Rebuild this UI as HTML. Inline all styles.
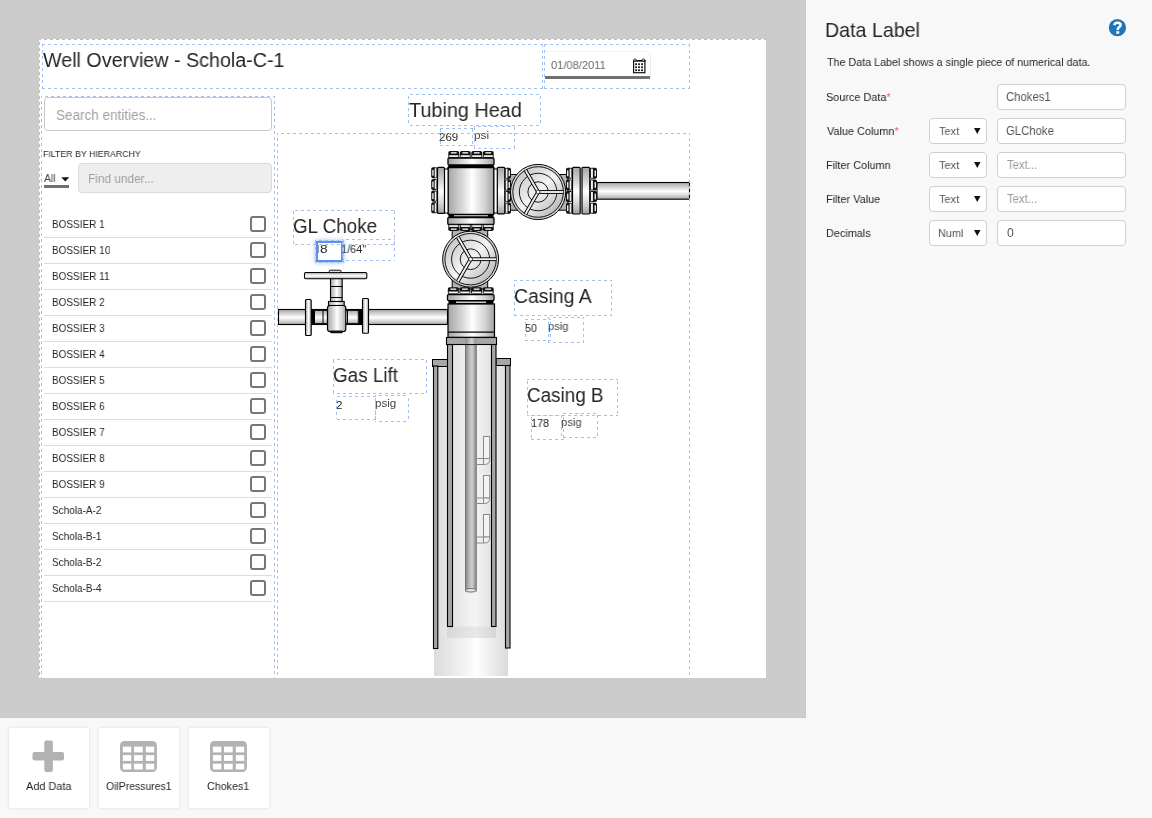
<!DOCTYPE html>
<html><head><meta charset="utf-8">
<style>
*{box-sizing:border-box;margin:0;padding:0}
html,body{width:1152px;height:818px;overflow:hidden;background:#f8f8f8;font-family:"Liberation Sans",sans-serif;color:#333;-webkit-font-smoothing:antialiased}
#stage{position:absolute;left:0;top:0;width:806px;height:718px;background:#cccccc;overflow:hidden}
#clip{position:absolute;left:39px;top:39px;width:727px;height:639px;background:#fff;overflow:hidden}
#inner{position:absolute;left:-39px;top:-39px;width:806px;height:718px}
.t{position:absolute;white-space:nowrap;line-height:1;transform-origin:0 0;will-change:transform}
.row{position:absolute;left:44px;width:228px;height:1px;background:#dcdcdc}
.cb{position:absolute;left:250px;width:16px;height:16px;border:2px solid #777;border-radius:3px}
.inp{position:absolute;background:#fff;border:1px solid #cfcfcf;border-radius:4px}
.card{position:absolute;top:728px;width:80px;height:80px;background:#fff;box-shadow:0 0 3px rgba(0,0,0,0.12)}
</style></head><body>
<div id="stage"><div id="clip"><div id="inner">
<svg style="position:absolute;left:0;top:0" width="806" height="718" viewBox="0 0 806 718">
<defs>
<linearGradient id="gh" x1="0" y1="0" x2="1" y2="0">
<stop offset="0" stop-color="#a6a6a6"/><stop offset="0.3" stop-color="#d6d6d6"/><stop offset="0.52" stop-color="#ffffff"/><stop offset="0.8" stop-color="#d2d2d2"/><stop offset="1" stop-color="#a2a2a2"/></linearGradient>
<linearGradient id="gv" x1="0" y1="0" x2="0" y2="1">
<stop offset="0" stop-color="#a6a6a6"/><stop offset="0.3" stop-color="#d6d6d6"/><stop offset="0.52" stop-color="#ffffff"/><stop offset="0.8" stop-color="#d2d2d2"/><stop offset="1" stop-color="#a2a2a2"/></linearGradient>
<linearGradient id="gt" x1="0" y1="0" x2="1" y2="0">
<stop offset="0" stop-color="#8c8c8c"/><stop offset="0.5" stop-color="#c9c9c9"/><stop offset="0.62" stop-color="#cdcdcd"/><stop offset="1" stop-color="#8c8c8c"/></linearGradient>
<linearGradient id="gfill" x1="0" y1="0" x2="1" y2="0">
<stop offset="0" stop-color="#dcdcdc"/><stop offset="0.48" stop-color="#f6f6f6"/><stop offset="0.56" stop-color="#ffffff"/><stop offset="1" stop-color="#dadada"/></linearGradient>
<linearGradient id="gfill2" x1="0" y1="0" x2="1" y2="0">
<stop offset="0" stop-color="#e2e2e2"/><stop offset="0.45" stop-color="#f2f2f2"/><stop offset="0.6" stop-color="#f4f4f4"/><stop offset="1" stop-color="#e2e2e2"/></linearGradient>
<linearGradient id="gwheel" x1="0" y1="0" x2="1" y2="1">
<stop offset="0" stop-color="#b8b8b8"/><stop offset="0.5" stop-color="#f4f4f4"/><stop offset="1" stop-color="#a8a8a8"/></linearGradient>
<linearGradient id="gring" x1="0" y1="0" x2="1" y2="1">
<stop offset="0" stop-color="#e8e8e8"/><stop offset="0.5" stop-color="#c8c8c8"/><stop offset="1" stop-color="#d8d8d8"/></linearGradient>
</defs>
<rect x="434" y="366" width="74.00" height="310.00" rx="0" fill="url(#gfill)" stroke="none" stroke-width="0" />
<rect x="452.5" y="344.5" width="38.50" height="282.50" rx="0" fill="url(#gfill2)" stroke="none" stroke-width="0" />
<rect x="447" y="626.5" width="49.00" height="11.50" rx="0" fill="url(#gfill2)" stroke="none" stroke-width="0" />
<rect x="447" y="626.5" width="49.00" height="11.50" rx="0" fill="rgba(0,0,0,0.05)" stroke="none" stroke-width="0" />
<rect x="432.5" y="359.5" width="15.00" height="7.00" rx="0" fill="#a6a6a6" stroke="#000" stroke-width="1" />
<rect x="496" y="358.5" width="14.50" height="7.00" rx="0" fill="#a6a6a6" stroke="#000" stroke-width="1" />
<rect x="433.5" y="366" width="4.30" height="282.50" rx="0" fill="#a6a6a6" stroke="#000" stroke-width="1.1" />
<rect x="505.5" y="365.5" width="4.50" height="282.50" rx="0" fill="#a6a6a6" stroke="#000" stroke-width="1.1" />
<rect x="447.5" y="344.5" width="5.00" height="282.00" rx="0" fill="#a6a6a6" stroke="#000" stroke-width="1.1" />
<rect x="491.5" y="344.5" width="4.50" height="282.00" rx="0" fill="#a6a6a6" stroke="#000" stroke-width="1.1" />
<rect x="465.6" y="340" width="10.60" height="251.00" rx="0" fill="url(#gt)" stroke="#6e6e6e" stroke-width="1" />
<ellipse cx="470.9" cy="590.3" rx="5.3" ry="1.8" fill="#e8e8e8" stroke="#6e6e6e" stroke-width="1"/>
<rect x="483.5" y="436.5" width="6.2" height="22.0" fill="#f3f3f3" stroke="#8a8a8a" stroke-width="1"/>
<path d="M476.5 458.5 H489.7 V459.5 Q489.7 464.5 484.5 464.5 H476.5 Z" fill="#efefef" stroke="#8a8a8a" stroke-width="1"/>
<line x1="483.5" y1="458.5" x2="483.5" y2="464.5" stroke="#8a8a8a" stroke-width="1"/>
<rect x="483.5" y="475.5" width="6.2" height="22.5" fill="#f3f3f3" stroke="#8a8a8a" stroke-width="1"/>
<path d="M476.5 498 H489.7 V498.5 Q489.7 503.5 484.5 503.5 H476.5 Z" fill="#efefef" stroke="#8a8a8a" stroke-width="1"/>
<line x1="483.5" y1="498" x2="483.5" y2="503.5" stroke="#8a8a8a" stroke-width="1"/>
<rect x="483.5" y="514.5" width="6.2" height="22.5" fill="#f3f3f3" stroke="#8a8a8a" stroke-width="1"/>
<path d="M476.5 537 H489.7 V538 Q489.7 543 484.5 543 H476.5 Z" fill="#efefef" stroke="#8a8a8a" stroke-width="1"/>
<line x1="483.5" y1="537" x2="483.5" y2="543" stroke="#8a8a8a" stroke-width="1"/>
<rect x="446.5" y="337.5" width="50.00" height="7.00" rx="0" fill="#a6a6a6" stroke="#000" stroke-width="1.1" />
<rect x="465.6" y="338.1" width="10.60" height="5.90" rx="0" fill="url(#gt)" stroke="none" stroke-width="0" />
<rect x="448" y="304" width="46.50" height="33.30" rx="0" fill="url(#gh)" stroke="#000" stroke-width="1.2" />
<line x1="448" y1="332.2" x2="494.5" y2="332.2" stroke="#000" stroke-width="1.2"/>
<rect x="278.5" y="309.5" width="169.00" height="15.00" rx="0" fill="url(#gv)" stroke="#000" stroke-width="1.1" />
<rect x="311" y="310.2" width="51.00" height="13.60" rx="0" fill="url(#gv)" stroke="#000" stroke-width="1.3" />
<line x1="314.5" y1="310.5" x2="314.5" y2="323.5" stroke="#000" stroke-width="1"/>
<line x1="323" y1="310.5" x2="323" y2="323.5" stroke="#000" stroke-width="1"/>
<line x1="347.5" y1="310.5" x2="347.5" y2="323.5" stroke="#000" stroke-width="1"/>
<line x1="358.3" y1="310.5" x2="358.3" y2="323.5" stroke="#000" stroke-width="1"/>
<path d="M311 309.5 L314 311 V323 L311 324.5Z" fill="#000"/><path d="M362 309.5 L359 311 V323 L362 324.5Z" fill="#000"/>
<rect x="305.5" y="299.5" width="5.70" height="36.00" rx="1" fill="url(#gh)" stroke="#000" stroke-width="1.1" />
<rect x="362.5" y="298.5" width="6.00" height="34.70" rx="1" fill="url(#gh)" stroke="#000" stroke-width="1.1" />
<rect x="330.5" y="278.5" width="11.70" height="26.50" rx="0" fill="url(#gh)" stroke="#000" stroke-width="1.1" />
<line x1="330.5" y1="286.5" x2="342.2" y2="286.5" stroke="#000" stroke-width="1"/><line x1="330.5" y1="297.5" x2="342.2" y2="297.5" stroke="#000" stroke-width="1"/>
<rect x="328.5" y="301.5" width="15.70" height="4.00" rx="0" fill="url(#gh)" stroke="#000" stroke-width="1.1" />
<rect x="327.5" y="305.5" width="18.30" height="26.00" rx="2.5" fill="url(#gh)" stroke="#000" stroke-width="1.2" />
<rect x="330" y="330.5" width="13.00" height="2.70" rx="1.2" fill="#111" stroke="none" stroke-width="0" />
<rect x="304.5" y="272.5" width="62.30" height="6.20" rx="1.2" fill="url(#gv)" stroke="#000" stroke-width="1.1" />
<rect x="329.2" y="270.2" width="11.80" height="2.40" rx="1" fill="#ddd" stroke="#000" stroke-width="0.9" />
<rect x="452.2" y="229" width="35.50" height="60.00" rx="0" fill="#b2b2b2" stroke="#000" stroke-width="1" />
<rect x="508" y="174.5" width="60.00" height="35.70" rx="0" fill="#b2b2b2" stroke="#000" stroke-width="1" />
<rect x="597" y="182.5" width="92.50" height="16.70" rx="0" fill="url(#gv)" stroke="#000" stroke-width="1.1" />
<rect x="448.30" y="151" width="10.90" height="7.300000000000011" rx="1.8" fill="#111"/>
<rect x="450.88" y="152.20" width="5.75" height="1.3" fill="#fff"/>
<rect x="449.20" y="155.23" width="9.10" height="1.83" fill="#f2f2f2"/>
<rect x="459.80" y="151" width="10.90" height="7.300000000000011" rx="1.8" fill="#111"/>
<rect x="462.38" y="152.20" width="5.75" height="1.3" fill="#fff"/>
<rect x="460.70" y="155.23" width="9.10" height="1.83" fill="#f2f2f2"/>
<rect x="471.30" y="151" width="10.90" height="7.300000000000011" rx="1.8" fill="#111"/>
<rect x="473.88" y="152.20" width="5.75" height="1.3" fill="#fff"/>
<rect x="472.20" y="155.23" width="9.10" height="1.83" fill="#f2f2f2"/>
<rect x="482.80" y="151" width="10.90" height="7.300000000000011" rx="1.8" fill="#111"/>
<rect x="485.38" y="152.20" width="5.75" height="1.3" fill="#fff"/>
<rect x="483.70" y="155.23" width="9.10" height="1.83" fill="#f2f2f2"/>
<path d="M449 164.5 H493 L495 168.5 H447 Z" fill="#000"/>
<rect x="448" y="158" width="46.00" height="7.00" rx="1" fill="url(#gh)" stroke="#000" stroke-width="1.3" />
<rect x="448.5" y="214" width="45" height="3.6" fill="#000"/>
<rect x="454" y="215.1" width="34" height="1.2" fill="#fff"/>
<rect x="447.8" y="217.5" width="46.20" height="7.00" rx="1" fill="url(#gh)" stroke="#000" stroke-width="1.3" />
<rect x="448.30" y="224" width="10.90" height="7" rx="1.8" fill="#111"/>
<rect x="449.20" y="225.19" width="9.10" height="1.75" fill="#f2f2f2"/>
<rect x="450.88" y="228.50" width="5.75" height="1.3" fill="#fff"/>
<rect x="459.80" y="224" width="10.90" height="7" rx="1.8" fill="#111"/>
<rect x="460.70" y="225.19" width="9.10" height="1.75" fill="#f2f2f2"/>
<rect x="462.38" y="228.50" width="5.75" height="1.3" fill="#fff"/>
<rect x="471.30" y="224" width="10.90" height="7" rx="1.8" fill="#111"/>
<rect x="472.20" y="225.19" width="9.10" height="1.75" fill="#f2f2f2"/>
<rect x="473.88" y="228.50" width="5.75" height="1.3" fill="#fff"/>
<rect x="482.80" y="224" width="10.90" height="7" rx="1.8" fill="#111"/>
<rect x="483.70" y="225.19" width="9.10" height="1.75" fill="#f2f2f2"/>
<rect x="485.38" y="228.50" width="5.75" height="1.3" fill="#fff"/>
<rect x="448" y="167.5" width="46.00" height="47.00" rx="1" fill="url(#gh)" stroke="#000" stroke-width="1.5" />
<rect x="444.2" y="169" width="3.80" height="44.00" rx="0" fill="#fff" stroke="#000" stroke-width="1" />
<rect x="494" y="169" width="3.50" height="44.00" rx="0" fill="#fff" stroke="#000" stroke-width="1" />
<rect x="431.2" y="167.30" width="6.400000000000034" height="11.05" rx="1.8" fill="#111"/>
<rect x="432.30" y="169.91" width="1.3" height="5.82" fill="#fff"/>
<rect x="434.72" y="168.20" width="1.73" height="9.25" fill="#f2f2f2"/>
<rect x="431.2" y="178.95" width="6.400000000000034" height="11.05" rx="1.8" fill="#111"/>
<rect x="432.30" y="181.56" width="1.3" height="5.82" fill="#fff"/>
<rect x="434.72" y="179.85" width="1.73" height="9.25" fill="#f2f2f2"/>
<rect x="431.2" y="190.60" width="6.400000000000034" height="11.05" rx="1.8" fill="#111"/>
<rect x="432.30" y="193.21" width="1.3" height="5.82" fill="#fff"/>
<rect x="434.72" y="191.50" width="1.73" height="9.25" fill="#f2f2f2"/>
<rect x="431.2" y="202.25" width="6.400000000000034" height="11.05" rx="1.8" fill="#111"/>
<rect x="432.30" y="204.86" width="1.3" height="5.82" fill="#fff"/>
<rect x="434.72" y="203.15" width="1.73" height="9.25" fill="#f2f2f2"/>
<rect x="437.5" y="167.3" width="7.00" height="46.10" rx="1" fill="url(#gv)" stroke="#000" stroke-width="1.2" />
<rect x="497.3" y="167.3" width="7.50" height="46.50" rx="1" fill="url(#gv)" stroke="#000" stroke-width="1.2" />
<rect x="504.6" y="167.80" width="6.399999999999977" height="11.03" rx="1.8" fill="#111"/>
<rect x="505.75" y="168.70" width="1.73" height="9.22" fill="#f2f2f2"/>
<rect x="508.60" y="170.41" width="1.3" height="5.81" fill="#fff"/>
<rect x="504.6" y="179.43" width="6.399999999999977" height="11.03" rx="1.8" fill="#111"/>
<rect x="505.75" y="180.32" width="1.73" height="9.22" fill="#f2f2f2"/>
<rect x="508.60" y="182.03" width="1.3" height="5.81" fill="#fff"/>
<rect x="504.6" y="191.05" width="6.399999999999977" height="11.03" rx="1.8" fill="#111"/>
<rect x="505.75" y="191.95" width="1.73" height="9.22" fill="#f2f2f2"/>
<rect x="508.60" y="193.66" width="1.3" height="5.81" fill="#fff"/>
<rect x="504.6" y="202.68" width="6.399999999999977" height="11.03" rx="1.8" fill="#111"/>
<rect x="505.75" y="203.57" width="1.73" height="9.22" fill="#f2f2f2"/>
<rect x="508.60" y="205.28" width="1.3" height="5.81" fill="#fff"/>
<rect x="566" y="167.80" width="6.600000000000023" height="11.03" rx="1.8" fill="#111"/>
<rect x="567.10" y="170.41" width="1.3" height="5.81" fill="#fff"/>
<rect x="569.63" y="168.70" width="1.78" height="9.22" fill="#f2f2f2"/>
<rect x="566" y="179.43" width="6.600000000000023" height="11.03" rx="1.8" fill="#111"/>
<rect x="567.10" y="182.03" width="1.3" height="5.81" fill="#fff"/>
<rect x="569.63" y="180.32" width="1.78" height="9.22" fill="#f2f2f2"/>
<rect x="566" y="191.05" width="6.600000000000023" height="11.03" rx="1.8" fill="#111"/>
<rect x="567.10" y="193.66" width="1.3" height="5.81" fill="#fff"/>
<rect x="569.63" y="191.95" width="1.78" height="9.22" fill="#f2f2f2"/>
<rect x="566" y="202.68" width="6.600000000000023" height="11.03" rx="1.8" fill="#111"/>
<rect x="567.10" y="205.28" width="1.3" height="5.81" fill="#fff"/>
<rect x="569.63" y="203.57" width="1.78" height="9.22" fill="#f2f2f2"/>
<rect x="572.5" y="167.3" width="7.70" height="46.70" rx="1" fill="url(#gv)" stroke="#000" stroke-width="1.2" />
<rect x="582" y="167.3" width="7.80" height="46.70" rx="1" fill="url(#gv)" stroke="#000" stroke-width="1.2" />
<rect x="589.6" y="167.80" width="7.399999999999977" height="11.03" rx="1.8" fill="#111"/>
<rect x="590.93" y="168.70" width="2.00" height="9.22" fill="#f2f2f2"/>
<rect x="594.60" y="170.41" width="1.3" height="5.81" fill="#fff"/>
<rect x="589.6" y="179.43" width="7.399999999999977" height="11.03" rx="1.8" fill="#111"/>
<rect x="590.93" y="180.32" width="2.00" height="9.22" fill="#f2f2f2"/>
<rect x="594.60" y="182.03" width="1.3" height="5.81" fill="#fff"/>
<rect x="589.6" y="191.05" width="7.399999999999977" height="11.03" rx="1.8" fill="#111"/>
<rect x="590.93" y="191.95" width="2.00" height="9.22" fill="#f2f2f2"/>
<rect x="594.60" y="193.66" width="1.3" height="5.81" fill="#fff"/>
<rect x="589.6" y="202.68" width="7.399999999999977" height="11.03" rx="1.8" fill="#111"/>
<rect x="590.93" y="203.57" width="2.00" height="9.22" fill="#f2f2f2"/>
<rect x="594.60" y="205.28" width="1.3" height="5.81" fill="#fff"/>
<rect x="447.80" y="287.3" width="11.03" height="7.300000000000011" rx="1.8" fill="#111"/>
<rect x="450.41" y="288.50" width="5.81" height="1.3" fill="#fff"/>
<rect x="448.70" y="291.53" width="9.22" height="1.83" fill="#f2f2f2"/>
<rect x="459.43" y="287.3" width="11.03" height="7.300000000000011" rx="1.8" fill="#111"/>
<rect x="462.03" y="288.50" width="5.81" height="1.3" fill="#fff"/>
<rect x="460.32" y="291.53" width="9.22" height="1.83" fill="#f2f2f2"/>
<rect x="471.05" y="287.3" width="11.03" height="7.300000000000011" rx="1.8" fill="#111"/>
<rect x="473.66" y="288.50" width="5.81" height="1.3" fill="#fff"/>
<rect x="471.95" y="291.53" width="9.22" height="1.83" fill="#f2f2f2"/>
<rect x="482.68" y="287.3" width="11.03" height="7.300000000000011" rx="1.8" fill="#111"/>
<rect x="485.28" y="288.50" width="5.81" height="1.3" fill="#fff"/>
<rect x="483.57" y="291.53" width="9.22" height="1.83" fill="#f2f2f2"/>
<rect x="447.5" y="294.6" width="46.50" height="6.00" rx="1" fill="url(#gh)" stroke="#000" stroke-width="1.3" />
<rect x="448.5" y="300.4" width="45" height="3.6" fill="#000"/>
<rect x="456" y="301.6" width="30" height="1.2" fill="#fff"/>
<circle cx="538.1" cy="192.0" r="27.6" fill="url(#gring)" stroke="#000" stroke-width="1"/>
<circle cx="538.1" cy="192.0" r="25.3" fill="url(#gwheel)" stroke="#000" stroke-width="0.9"/>
<circle cx="538.1" cy="192.0" r="18.77" fill="none" stroke="#000" stroke-width="0.9"/>
<circle cx="538.1" cy="192.0" r="10.21" fill="none" stroke="#000" stroke-width="0.9"/>
<line x1="538.1" y1="192.0" x2="563.10" y2="192.00" stroke="#000" stroke-width="3.8"/>
<line x1="538.1" y1="192.0" x2="563.10" y2="192.00" stroke="#f0f0f0" stroke-width="1.9"/>
<line x1="538.1" y1="192.0" x2="525.60" y2="213.65" stroke="#000" stroke-width="3.8"/>
<line x1="538.1" y1="192.0" x2="525.60" y2="213.65" stroke="#f0f0f0" stroke-width="1.9"/>
<line x1="538.1" y1="192.0" x2="525.60" y2="170.35" stroke="#000" stroke-width="3.8"/>
<line x1="538.1" y1="192.0" x2="525.60" y2="170.35" stroke="#f0f0f0" stroke-width="1.9"/>
<circle cx="538.1" cy="192.0" r="1.9" fill="#fff" stroke="#000" stroke-width="0.7"/>
<circle cx="470.6" cy="259.2" r="28" fill="url(#gring)" stroke="#000" stroke-width="1"/>
<circle cx="470.6" cy="259.2" r="25.7" fill="url(#gwheel)" stroke="#000" stroke-width="0.9"/>
<circle cx="470.6" cy="259.2" r="19.04" fill="none" stroke="#000" stroke-width="0.9"/>
<circle cx="470.6" cy="259.2" r="10.36" fill="none" stroke="#000" stroke-width="0.9"/>
<line x1="470.6" y1="259.2" x2="496.00" y2="259.20" stroke="#000" stroke-width="3.8"/>
<line x1="470.6" y1="259.2" x2="496.00" y2="259.20" stroke="#f0f0f0" stroke-width="1.9"/>
<line x1="470.6" y1="259.2" x2="457.90" y2="281.20" stroke="#000" stroke-width="3.8"/>
<line x1="470.6" y1="259.2" x2="457.90" y2="281.20" stroke="#f0f0f0" stroke-width="1.9"/>
<line x1="470.6" y1="259.2" x2="457.90" y2="237.20" stroke="#000" stroke-width="3.8"/>
<line x1="470.6" y1="259.2" x2="457.90" y2="237.20" stroke="#f0f0f0" stroke-width="1.9"/>
<circle cx="470.6" cy="259.2" r="1.9" fill="#fff" stroke="#000" stroke-width="0.7"/>
</svg>
<div style="position:absolute;left:545px;top:51px;width:106px;height:27px;border-top:1px solid #f3f3f3;border-right:1px solid #ededed;border-radius:0 6px 0 0"></div>
<div style="position:absolute;left:545px;top:76px;width:105px;height:3px;background:#707070"></div>
<svg style="position:absolute;left:633px;top:58px" width="13" height="16" viewBox="0 0 13 16">
<rect x="0.6" y="2.6" width="11.3" height="12.1" fill="#fff" stroke="#111" stroke-width="1.2"/>
<rect x="0" y="2" width="12.5" height="1.6" fill="#111"/>
<rect x="0.9" y="1" width="2.4" height="2.1" rx="0.8" fill="#fff" stroke="#111" stroke-width="0.9"/>
<rect x="9.2" y="1" width="2.4" height="2.1" rx="0.8" fill="#fff" stroke="#111" stroke-width="0.9"/>
<g fill="#111"><rect x="2.2" y="5.3" width="1.8" height="1.8"/><rect x="5.1" y="5.3" width="1.8" height="1.8"/><rect x="8.1" y="5.3" width="1.8" height="1.8"/>
<rect x="2.2" y="8.3" width="1.8" height="1.8"/><rect x="5.1" y="8.3" width="1.8" height="1.8"/><rect x="8.1" y="8.3" width="1.8" height="1.8"/>
<rect x="2.2" y="11.3" width="1.8" height="1.8"/><rect x="5.1" y="11.3" width="1.8" height="1.8"/><rect x="8.1" y="11.3" width="1.8" height="1.8"/></g>
</svg>
<div class="inp" style="left:44px;top:97px;width:228px;height:34px;border-color:#c8c8c8"></div>
<div style="position:absolute;left:44px;top:185px;width:25px;height:3px;background:#707070"></div>
<svg style="position:absolute;left:61px;top:176.5px" width="9" height="5"><path d="M0.3 0.3 H8.3 L4.3 4.5Z" fill="#111"/></svg>
<div class="inp" style="left:78px;top:163px;width:194px;height:30px;background:#eeeeee;border-color:#dadada"></div>
<div class="cb" style="top:216px"></div>
<div class="row" style="top:237px"></div>
<div class="cb" style="top:242px"></div>
<div class="row" style="top:263px"></div>
<div class="cb" style="top:268px"></div>
<div class="row" style="top:289px"></div>
<div class="cb" style="top:294px"></div>
<div class="row" style="top:315px"></div>
<div class="cb" style="top:320px"></div>
<div class="row" style="top:341px"></div>
<div class="cb" style="top:346px"></div>
<div class="row" style="top:367px"></div>
<div class="cb" style="top:372px"></div>
<div class="row" style="top:393px"></div>
<div class="cb" style="top:398px"></div>
<div class="row" style="top:419px"></div>
<div class="cb" style="top:424px"></div>
<div class="row" style="top:445px"></div>
<div class="cb" style="top:450px"></div>
<div class="row" style="top:471px"></div>
<div class="cb" style="top:476px"></div>
<div class="row" style="top:497px"></div>
<div class="cb" style="top:502px"></div>
<div class="row" style="top:523px"></div>
<div class="cb" style="top:528px"></div>
<div class="row" style="top:549px"></div>
<div class="cb" style="top:554px"></div>
<div class="row" style="top:575px"></div>
<div class="cb" style="top:580px"></div>
<div class="row" style="top:601px"></div>
<div class="t" style="left:42.90px;top:49.75px;font-size:20px;color:#262626;transform:scaleX(0.9848);">Well Overview - Schola-C-1</div>
<div class="t" style="left:409.00px;top:99.60px;font-size:20px;color:#262626;transform:scaleX(0.9912);">Tubing Head</div>
<div class="t" style="left:293.46px;top:215.90px;font-size:20px;color:#262626;transform:scaleX(0.9409);">GL Choke</div>
<div class="t" style="left:513.93px;top:285.90px;font-size:20px;color:#262626;transform:scaleX(0.9696);">Casing A</div>
<div class="t" style="left:333.26px;top:364.90px;font-size:20px;color:#262626;transform:scaleX(0.9441);">Gas Lift</div>
<div class="t" style="left:527.06px;top:385.20px;font-size:20px;color:#262626;transform:scaleX(0.9430);">Casing B</div>
<div class="t" style="left:439.40px;top:131.90px;font-size:11.5px;color:#262626;">269</div>
<div class="t" style="left:473.78px;top:130.10px;font-size:11.5px;color:#444;transform:scaleX(1.0231);">psi</div>
<div class="t" style="left:320.30px;top:244.00px;font-size:11.5px;color:#262626;transform:scaleX(1.1833);">8</div>
<div class="t" style="left:341.25px;top:244.00px;font-size:11.5px;color:#262626;transform:scaleX(0.9480);">1/64&quot;</div>
<div class="t" style="left:524.87px;top:322.90px;font-size:11.5px;color:#262626;transform:scaleX(0.9333);">50</div>
<div class="t" style="left:548.03px;top:321.10px;font-size:11.5px;color:#444;transform:scaleX(0.9650);">psig</div>
<div class="t" style="left:335.50px;top:399.60px;font-size:11.5px;color:#262626;">2</div>
<div class="t" style="left:374.59px;top:398.00px;font-size:11.5px;color:#444;transform:scaleX(1.0100);">psig</div>
<div class="t" style="left:531.46px;top:418.40px;font-size:11.5px;color:#262626;transform:scaleX(0.9444);">178</div>
<div class="t" style="left:561.02px;top:417.20px;font-size:11.5px;color:#444;transform:scaleX(0.9750);">psig</div>
<div class="t" style="left:550.70px;top:59.80px;font-size:11.4px;color:#6a6a6a;transform:scaleX(0.9750);">01/08/2011</div>
<div class="t" style="left:55.96px;top:107.80px;font-size:14.3px;color:#a0a0a0;transform:scaleX(0.9442);">Search entities...</div>
<div class="t" style="left:43.06px;top:148.90px;font-size:9.4px;color:#262626;transform:scaleX(0.9369);">FILTER BY HIERARCHY</div>
<div class="t" style="left:44.00px;top:172.90px;font-size:11.3px;color:#444;transform:scaleX(0.9250);">All</div>
<div class="t" style="left:88.08px;top:173.00px;font-size:12.9px;color:#a0a0a0;transform:scaleX(0.9186);">Find under...</div>
<div class="t" style="left:52.12px;top:218.80px;font-size:11.3px;color:#262626;transform:scaleX(0.8850);">BOSSIER 1</div>
<div class="t" style="left:52.12px;top:244.80px;font-size:11.3px;color:#262626;transform:scaleX(0.8850);">BOSSIER 10</div>
<div class="t" style="left:52.12px;top:270.80px;font-size:11.3px;color:#262626;transform:scaleX(0.8850);">BOSSIER 11</div>
<div class="t" style="left:52.12px;top:296.80px;font-size:11.3px;color:#262626;transform:scaleX(0.8850);">BOSSIER 2</div>
<div class="t" style="left:52.12px;top:322.80px;font-size:11.3px;color:#262626;transform:scaleX(0.8850);">BOSSIER 3</div>
<div class="t" style="left:52.12px;top:348.80px;font-size:11.3px;color:#262626;transform:scaleX(0.8850);">BOSSIER 4</div>
<div class="t" style="left:52.12px;top:374.80px;font-size:11.3px;color:#262626;transform:scaleX(0.8850);">BOSSIER 5</div>
<div class="t" style="left:52.12px;top:400.80px;font-size:11.3px;color:#262626;transform:scaleX(0.8850);">BOSSIER 6</div>
<div class="t" style="left:52.12px;top:426.80px;font-size:11.3px;color:#262626;transform:scaleX(0.8850);">BOSSIER 7</div>
<div class="t" style="left:52.12px;top:452.80px;font-size:11.3px;color:#262626;transform:scaleX(0.8850);">BOSSIER 8</div>
<div class="t" style="left:52.12px;top:478.80px;font-size:11.3px;color:#262626;transform:scaleX(0.8850);">BOSSIER 9</div>
<div class="t" style="left:52.12px;top:504.80px;font-size:11.3px;color:#262626;transform:scaleX(0.8850);">Schola-A-2</div>
<div class="t" style="left:52.12px;top:530.80px;font-size:11.3px;color:#262626;transform:scaleX(0.8850);">Schola-B-1</div>
<div class="t" style="left:52.12px;top:556.80px;font-size:11.3px;color:#262626;transform:scaleX(0.8850);">Schola-B-2</div>
<div class="t" style="left:52.12px;top:582.80px;font-size:11.3px;color:#262626;transform:scaleX(0.8850);">Schola-B-4</div>
<div style="position:absolute;left:316px;top:241px;width:27px;height:21px;border:2px solid #5b8ff0;box-shadow:0 0 4px 1px rgba(91,143,240,0.55)"></div>
<div style="position:absolute;left:318px;top:245px;width:1px;height:8px;background:#999"></div>
<svg style="position:absolute;left:0;top:0" width="806" height="718"><path fill="#a3c1f1" d="M39 39h2v1h-2zM44 39h3v1h-3zM50 39h3v1h-3zM56 39h3v1h-3zM62 39h3v1h-3zM68 39h3v1h-3zM74 39h3v1h-3zM80 39h3v1h-3zM86 39h3v1h-3zM92 39h3v1h-3zM98 39h3v1h-3zM104 39h3v1h-3zM110 39h3v1h-3zM116 39h3v1h-3zM122 39h3v1h-3zM128 39h3v1h-3zM134 39h3v1h-3zM140 39h3v1h-3zM146 39h3v1h-3zM152 39h3v1h-3zM158 39h3v1h-3zM164 39h3v1h-3zM170 39h3v1h-3zM176 39h3v1h-3zM182 39h3v1h-3zM188 39h3v1h-3zM194 39h3v1h-3zM200 39h3v1h-3zM206 39h3v1h-3zM212 39h3v1h-3zM218 39h3v1h-3zM224 39h3v1h-3zM230 39h3v1h-3zM236 39h3v1h-3zM242 39h3v1h-3zM248 39h3v1h-3zM254 39h3v1h-3zM260 39h3v1h-3zM266 39h3v1h-3zM272 39h3v1h-3zM278 39h3v1h-3zM284 39h3v1h-3zM290 39h3v1h-3zM296 39h3v1h-3zM302 39h3v1h-3zM308 39h3v1h-3zM314 39h3v1h-3zM320 39h3v1h-3zM326 39h3v1h-3zM332 39h3v1h-3zM338 39h3v1h-3zM344 39h3v1h-3zM350 39h3v1h-3zM356 39h3v1h-3zM362 39h3v1h-3zM368 39h3v1h-3zM374 39h3v1h-3zM380 39h3v1h-3zM386 39h3v1h-3zM392 39h3v1h-3zM398 39h3v1h-3zM404 39h3v1h-3zM410 39h3v1h-3zM416 39h3v1h-3zM422 39h3v1h-3zM428 39h3v1h-3zM434 39h3v1h-3zM440 39h3v1h-3zM446 39h3v1h-3zM452 39h3v1h-3zM458 39h3v1h-3zM464 39h3v1h-3zM470 39h3v1h-3zM476 39h3v1h-3zM482 39h3v1h-3zM488 39h3v1h-3zM494 39h3v1h-3zM500 39h3v1h-3zM506 39h3v1h-3zM512 39h3v1h-3zM518 39h3v1h-3zM524 39h3v1h-3zM530 39h3v1h-3zM536 39h3v1h-3zM542 39h3v1h-3zM548 39h3v1h-3zM554 39h3v1h-3zM560 39h3v1h-3zM566 39h3v1h-3zM572 39h3v1h-3zM578 39h3v1h-3zM584 39h3v1h-3zM590 39h3v1h-3zM596 39h3v1h-3zM602 39h3v1h-3zM608 39h3v1h-3zM614 39h3v1h-3zM620 39h3v1h-3zM626 39h3v1h-3zM632 39h3v1h-3zM638 39h3v1h-3zM644 39h3v1h-3zM650 39h3v1h-3zM656 39h3v1h-3zM662 39h3v1h-3zM668 39h3v1h-3zM674 39h3v1h-3zM680 39h3v1h-3zM686 39h3v1h-3zM692 39h3v1h-3zM698 39h3v1h-3zM704 39h3v1h-3zM710 39h3v1h-3zM716 39h3v1h-3zM722 39h3v1h-3zM728 39h3v1h-3zM734 39h3v1h-3zM740 39h3v1h-3zM746 39h3v1h-3zM752 39h3v1h-3zM758 39h3v1h-3zM764 39h3v1h-3zM39 42h1v3h-1zM39 48h1v3h-1zM39 54h1v3h-1zM39 60h1v3h-1zM39 66h1v3h-1zM39 72h1v3h-1zM39 78h1v3h-1zM39 84h1v3h-1zM39 90h1v3h-1zM39 96h1v3h-1zM39 102h1v3h-1zM39 108h1v3h-1zM39 114h1v3h-1zM39 120h1v3h-1zM39 126h1v3h-1zM39 132h1v3h-1zM39 138h1v3h-1zM39 144h1v3h-1zM39 150h1v3h-1zM39 156h1v3h-1zM39 162h1v3h-1zM39 168h1v3h-1zM39 174h1v3h-1zM39 180h1v3h-1zM39 186h1v3h-1zM39 192h1v3h-1zM39 198h1v3h-1zM39 204h1v3h-1zM39 210h1v3h-1zM39 216h1v3h-1zM39 222h1v3h-1zM39 228h1v3h-1zM39 234h1v3h-1zM39 240h1v3h-1zM39 246h1v3h-1zM39 252h1v3h-1zM39 258h1v3h-1zM39 264h1v3h-1zM39 270h1v3h-1zM39 276h1v3h-1zM39 282h1v3h-1zM39 288h1v3h-1zM39 294h1v3h-1zM39 300h1v3h-1zM39 306h1v3h-1zM39 312h1v3h-1zM39 318h1v3h-1zM39 324h1v3h-1zM39 330h1v3h-1zM39 336h1v3h-1zM39 342h1v3h-1zM39 348h1v3h-1zM39 354h1v3h-1zM39 360h1v3h-1zM39 366h1v3h-1zM39 372h1v3h-1zM39 378h1v3h-1zM39 384h1v3h-1zM39 390h1v3h-1zM39 396h1v3h-1zM39 402h1v3h-1zM39 408h1v3h-1zM39 414h1v3h-1zM39 420h1v3h-1zM39 426h1v3h-1zM39 432h1v3h-1zM39 438h1v3h-1zM39 444h1v3h-1zM39 450h1v3h-1zM39 456h1v3h-1zM39 462h1v3h-1zM39 468h1v3h-1zM39 474h1v3h-1zM39 480h1v3h-1zM39 486h1v3h-1zM39 492h1v3h-1zM39 498h1v3h-1zM39 504h1v3h-1zM39 510h1v3h-1zM39 516h1v3h-1zM39 522h1v3h-1zM39 528h1v3h-1zM39 534h1v3h-1zM39 540h1v3h-1zM39 546h1v3h-1zM39 552h1v3h-1zM39 558h1v3h-1zM39 564h1v3h-1zM39 570h1v3h-1zM39 576h1v3h-1zM39 582h1v3h-1zM39 588h1v3h-1zM39 594h1v3h-1zM39 600h1v3h-1zM39 606h1v3h-1zM39 612h1v3h-1zM39 618h1v3h-1zM39 624h1v3h-1zM39 630h1v3h-1zM39 636h1v3h-1zM39 642h1v3h-1zM39 648h1v3h-1zM39 654h1v3h-1zM39 660h1v3h-1zM39 666h1v3h-1zM39 672h1v3h-1zM39 678h1v1h-1zM42 44h3v1h-3zM48 44h3v1h-3zM54 44h3v1h-3zM60 44h3v1h-3zM66 44h3v1h-3zM72 44h3v1h-3zM78 44h3v1h-3zM84 44h3v1h-3zM90 44h3v1h-3zM96 44h3v1h-3zM102 44h3v1h-3zM108 44h3v1h-3zM114 44h3v1h-3zM120 44h3v1h-3zM126 44h3v1h-3zM132 44h3v1h-3zM138 44h3v1h-3zM144 44h3v1h-3zM150 44h3v1h-3zM156 44h3v1h-3zM162 44h3v1h-3zM168 44h3v1h-3zM174 44h3v1h-3zM180 44h3v1h-3zM186 44h3v1h-3zM192 44h3v1h-3zM198 44h3v1h-3zM204 44h3v1h-3zM210 44h3v1h-3zM216 44h3v1h-3zM222 44h3v1h-3zM228 44h3v1h-3zM234 44h3v1h-3zM240 44h3v1h-3zM246 44h3v1h-3zM252 44h3v1h-3zM258 44h3v1h-3zM264 44h3v1h-3zM270 44h3v1h-3zM276 44h3v1h-3zM282 44h3v1h-3zM288 44h3v1h-3zM294 44h3v1h-3zM300 44h3v1h-3zM306 44h3v1h-3zM312 44h3v1h-3zM318 44h3v1h-3zM324 44h3v1h-3zM330 44h3v1h-3zM336 44h3v1h-3zM342 44h3v1h-3zM348 44h3v1h-3zM354 44h3v1h-3zM360 44h3v1h-3zM366 44h3v1h-3zM372 44h3v1h-3zM378 44h3v1h-3zM384 44h3v1h-3zM390 44h3v1h-3zM396 44h3v1h-3zM402 44h3v1h-3zM408 44h3v1h-3zM414 44h3v1h-3zM420 44h3v1h-3zM426 44h3v1h-3zM432 44h3v1h-3zM438 44h3v1h-3zM444 44h3v1h-3zM450 44h3v1h-3zM456 44h3v1h-3zM462 44h3v1h-3zM468 44h3v1h-3zM474 44h3v1h-3zM480 44h3v1h-3zM486 44h3v1h-3zM492 44h3v1h-3zM498 44h3v1h-3zM504 44h3v1h-3zM510 44h3v1h-3zM516 44h3v1h-3zM522 44h3v1h-3zM528 44h3v1h-3zM534 44h3v1h-3zM540 44h3v1h-3zM42 88h3v1h-3zM48 88h3v1h-3zM54 88h3v1h-3zM60 88h3v1h-3zM66 88h3v1h-3zM72 88h3v1h-3zM78 88h3v1h-3zM84 88h3v1h-3zM90 88h3v1h-3zM96 88h3v1h-3zM102 88h3v1h-3zM108 88h3v1h-3zM114 88h3v1h-3zM120 88h3v1h-3zM126 88h3v1h-3zM132 88h3v1h-3zM138 88h3v1h-3zM144 88h3v1h-3zM150 88h3v1h-3zM156 88h3v1h-3zM162 88h3v1h-3zM168 88h3v1h-3zM174 88h3v1h-3zM180 88h3v1h-3zM186 88h3v1h-3zM192 88h3v1h-3zM198 88h3v1h-3zM204 88h3v1h-3zM210 88h3v1h-3zM216 88h3v1h-3zM222 88h3v1h-3zM228 88h3v1h-3zM234 88h3v1h-3zM240 88h3v1h-3zM246 88h3v1h-3zM252 88h3v1h-3zM258 88h3v1h-3zM264 88h3v1h-3zM270 88h3v1h-3zM276 88h3v1h-3zM282 88h3v1h-3zM288 88h3v1h-3zM294 88h3v1h-3zM300 88h3v1h-3zM306 88h3v1h-3zM312 88h3v1h-3zM318 88h3v1h-3zM324 88h3v1h-3zM330 88h3v1h-3zM336 88h3v1h-3zM342 88h3v1h-3zM348 88h3v1h-3zM354 88h3v1h-3zM360 88h3v1h-3zM366 88h3v1h-3zM372 88h3v1h-3zM378 88h3v1h-3zM384 88h3v1h-3zM390 88h3v1h-3zM396 88h3v1h-3zM402 88h3v1h-3zM408 88h3v1h-3zM414 88h3v1h-3zM420 88h3v1h-3zM426 88h3v1h-3zM432 88h3v1h-3zM438 88h3v1h-3zM444 88h3v1h-3zM450 88h3v1h-3zM456 88h3v1h-3zM462 88h3v1h-3zM468 88h3v1h-3zM474 88h3v1h-3zM480 88h3v1h-3zM486 88h3v1h-3zM492 88h3v1h-3zM498 88h3v1h-3zM504 88h3v1h-3zM510 88h3v1h-3zM516 88h3v1h-3zM522 88h3v1h-3zM528 88h3v1h-3zM534 88h3v1h-3zM540 88h3v1h-3zM42 45h1v2h-1zM42 50h1v3h-1zM42 56h1v3h-1zM42 62h1v3h-1zM42 68h1v3h-1zM42 74h1v3h-1zM42 80h1v3h-1zM42 86h1v2h-1zM542 45h1v2h-1zM542 50h1v3h-1zM542 56h1v3h-1zM542 62h1v3h-1zM542 68h1v3h-1zM542 74h1v3h-1zM542 80h1v3h-1zM542 86h1v2h-1zM544 44h3v1h-3zM550 44h3v1h-3zM556 44h3v1h-3zM562 44h3v1h-3zM568 44h3v1h-3zM574 44h3v1h-3zM580 44h3v1h-3zM586 44h3v1h-3zM592 44h3v1h-3zM598 44h3v1h-3zM604 44h3v1h-3zM610 44h3v1h-3zM616 44h3v1h-3zM622 44h3v1h-3zM628 44h3v1h-3zM634 44h3v1h-3zM640 44h3v1h-3zM646 44h3v1h-3zM652 44h3v1h-3zM658 44h3v1h-3zM664 44h3v1h-3zM670 44h3v1h-3zM676 44h3v1h-3zM682 44h3v1h-3zM688 44h2v1h-2zM544 88h3v1h-3zM550 88h3v1h-3zM556 88h3v1h-3zM562 88h3v1h-3zM568 88h3v1h-3zM574 88h3v1h-3zM580 88h3v1h-3zM586 88h3v1h-3zM592 88h3v1h-3zM598 88h3v1h-3zM604 88h3v1h-3zM610 88h3v1h-3zM616 88h3v1h-3zM622 88h3v1h-3zM628 88h3v1h-3zM634 88h3v1h-3zM640 88h3v1h-3zM646 88h3v1h-3zM652 88h3v1h-3zM658 88h3v1h-3zM664 88h3v1h-3zM670 88h3v1h-3zM676 88h3v1h-3zM682 88h3v1h-3zM688 88h2v1h-2zM544 45h1v2h-1zM544 50h1v3h-1zM544 56h1v3h-1zM544 62h1v3h-1zM544 68h1v3h-1zM544 74h1v3h-1zM544 80h1v3h-1zM544 86h1v2h-1zM689 45h1v2h-1zM689 50h1v3h-1zM689 56h1v3h-1zM689 62h1v3h-1zM689 68h1v3h-1zM689 74h1v3h-1zM689 80h1v3h-1zM689 86h1v2h-1zM41 96h1v1h-1zM45 96h3v1h-3zM51 96h3v1h-3zM57 96h3v1h-3zM63 96h3v1h-3zM69 96h3v1h-3zM75 96h3v1h-3zM81 96h3v1h-3zM87 96h3v1h-3zM93 96h3v1h-3zM99 96h3v1h-3zM105 96h3v1h-3zM111 96h3v1h-3zM117 96h3v1h-3zM123 96h3v1h-3zM129 96h3v1h-3zM135 96h3v1h-3zM141 96h3v1h-3zM147 96h3v1h-3zM153 96h3v1h-3zM159 96h3v1h-3zM165 96h3v1h-3zM171 96h3v1h-3zM177 96h3v1h-3zM183 96h3v1h-3zM189 96h3v1h-3zM195 96h3v1h-3zM201 96h3v1h-3zM207 96h3v1h-3zM213 96h3v1h-3zM219 96h3v1h-3zM225 96h3v1h-3zM231 96h3v1h-3zM237 96h3v1h-3zM243 96h3v1h-3zM249 96h3v1h-3zM255 96h3v1h-3zM261 96h3v1h-3zM267 96h3v1h-3zM273 96h2v1h-2zM41 96h1v2h-1zM41 97h1v1h-1zM41 101h1v3h-1zM41 107h1v3h-1zM41 113h1v3h-1zM41 119h1v3h-1zM41 125h1v3h-1zM41 131h1v3h-1zM41 137h1v3h-1zM41 143h1v3h-1zM41 149h1v3h-1zM41 155h1v3h-1zM41 161h1v3h-1zM41 167h1v3h-1zM41 173h1v3h-1zM41 179h1v3h-1zM41 185h1v3h-1zM41 191h1v3h-1zM41 197h1v3h-1zM41 203h1v3h-1zM41 209h1v3h-1zM41 215h1v3h-1zM41 221h1v3h-1zM41 227h1v3h-1zM41 233h1v3h-1zM41 239h1v3h-1zM41 245h1v3h-1zM41 251h1v3h-1zM41 257h1v3h-1zM41 263h1v3h-1zM41 269h1v3h-1zM41 275h1v3h-1zM41 281h1v3h-1zM41 287h1v3h-1zM41 293h1v3h-1zM41 299h1v3h-1zM41 305h1v3h-1zM41 311h1v3h-1zM41 317h1v3h-1zM41 323h1v3h-1zM41 329h1v3h-1zM41 335h1v3h-1zM41 341h1v3h-1zM41 347h1v3h-1zM41 353h1v3h-1zM41 359h1v3h-1zM41 365h1v3h-1zM41 371h1v3h-1zM41 377h1v3h-1zM41 383h1v3h-1zM41 389h1v3h-1zM41 395h1v3h-1zM41 401h1v3h-1zM41 407h1v3h-1zM41 413h1v3h-1zM41 419h1v3h-1zM41 425h1v3h-1zM41 431h1v3h-1zM41 437h1v3h-1zM41 443h1v3h-1zM41 449h1v3h-1zM41 455h1v3h-1zM41 461h1v3h-1zM41 467h1v3h-1zM41 473h1v3h-1zM41 479h1v3h-1zM41 485h1v3h-1zM41 491h1v3h-1zM41 497h1v3h-1zM41 503h1v3h-1zM41 509h1v3h-1zM41 515h1v3h-1zM41 521h1v3h-1zM41 527h1v3h-1zM41 533h1v3h-1zM41 539h1v3h-1zM41 545h1v3h-1zM41 551h1v3h-1zM41 557h1v3h-1zM41 563h1v3h-1zM41 569h1v3h-1zM41 575h1v3h-1zM41 581h1v3h-1zM41 587h1v3h-1zM41 593h1v3h-1zM41 599h1v3h-1zM41 605h1v3h-1zM41 611h1v3h-1zM41 617h1v3h-1zM41 623h1v3h-1zM41 629h1v3h-1zM41 635h1v3h-1zM41 641h1v3h-1zM41 647h1v3h-1zM41 653h1v3h-1zM41 659h1v3h-1zM41 665h1v3h-1zM41 671h1v3h-1zM41 677h1v3h-1zM41 683h1v3h-1zM41 689h1v3h-1zM41 695h1v3h-1zM41 701h1v3h-1zM41 707h1v3h-1zM41 713h1v3h-1zM41 719h1v3h-1zM41 725h1v3h-1zM41 731h1v3h-1zM41 737h1v3h-1zM41 743h1v3h-1zM41 749h1v3h-1zM41 755h1v3h-1zM274 97h1v1h-1zM274 101h1v3h-1zM274 107h1v3h-1zM274 113h1v3h-1zM274 119h1v3h-1zM274 125h1v3h-1zM274 131h1v3h-1zM274 137h1v3h-1zM274 143h1v3h-1zM274 149h1v3h-1zM274 155h1v3h-1zM274 161h1v3h-1zM274 167h1v3h-1zM274 173h1v3h-1zM274 179h1v3h-1zM274 185h1v3h-1zM274 191h1v3h-1zM274 197h1v3h-1zM274 203h1v3h-1zM274 209h1v3h-1zM274 215h1v3h-1zM274 221h1v3h-1zM274 227h1v3h-1zM274 233h1v3h-1zM274 239h1v3h-1zM274 245h1v3h-1zM274 251h1v3h-1zM274 257h1v3h-1zM274 263h1v3h-1zM274 269h1v3h-1zM274 275h1v3h-1zM274 281h1v3h-1zM274 287h1v3h-1zM274 293h1v3h-1zM274 299h1v3h-1zM274 305h1v3h-1zM274 311h1v3h-1zM274 317h1v3h-1zM274 323h1v3h-1zM274 329h1v3h-1zM274 335h1v3h-1zM274 341h1v3h-1zM274 347h1v3h-1zM274 353h1v3h-1zM274 359h1v3h-1zM274 365h1v3h-1zM274 371h1v3h-1zM274 377h1v3h-1zM274 383h1v3h-1zM274 389h1v3h-1zM274 395h1v3h-1zM274 401h1v3h-1zM274 407h1v3h-1zM274 413h1v3h-1zM274 419h1v3h-1zM274 425h1v3h-1zM274 431h1v3h-1zM274 437h1v3h-1zM274 443h1v3h-1zM274 449h1v3h-1zM274 455h1v3h-1zM274 461h1v3h-1zM274 467h1v3h-1zM274 473h1v3h-1zM274 479h1v3h-1zM274 485h1v3h-1zM274 491h1v3h-1zM274 497h1v3h-1zM274 503h1v3h-1zM274 509h1v3h-1zM274 515h1v3h-1zM274 521h1v3h-1zM274 527h1v3h-1zM274 533h1v3h-1zM274 539h1v3h-1zM274 545h1v3h-1zM274 551h1v3h-1zM274 557h1v3h-1zM274 563h1v3h-1zM274 569h1v3h-1zM274 575h1v3h-1zM274 581h1v3h-1zM274 587h1v3h-1zM274 593h1v3h-1zM274 599h1v3h-1zM274 605h1v3h-1zM274 611h1v3h-1zM274 617h1v3h-1zM274 623h1v3h-1zM274 629h1v3h-1zM274 635h1v3h-1zM274 641h1v3h-1zM274 647h1v3h-1zM274 653h1v3h-1zM274 659h1v3h-1zM274 665h1v3h-1zM274 671h1v3h-1zM274 677h1v3h-1zM274 683h1v3h-1zM274 689h1v3h-1zM274 695h1v3h-1zM274 701h1v3h-1zM274 707h1v3h-1zM274 713h1v3h-1zM274 719h1v3h-1zM274 725h1v3h-1zM274 731h1v3h-1zM274 737h1v3h-1zM274 743h1v3h-1zM274 749h1v3h-1zM274 755h1v3h-1zM277 133h1v1h-1zM281 133h3v1h-3zM287 133h3v1h-3zM293 133h3v1h-3zM299 133h3v1h-3zM305 133h3v1h-3zM311 133h3v1h-3zM317 133h3v1h-3zM323 133h3v1h-3zM329 133h3v1h-3zM335 133h3v1h-3zM341 133h3v1h-3zM347 133h3v1h-3zM353 133h3v1h-3zM359 133h3v1h-3zM365 133h3v1h-3zM371 133h3v1h-3zM377 133h3v1h-3zM383 133h3v1h-3zM389 133h3v1h-3zM395 133h3v1h-3zM401 133h3v1h-3zM407 133h3v1h-3zM413 133h3v1h-3zM419 133h3v1h-3zM425 133h3v1h-3zM431 133h3v1h-3zM437 133h3v1h-3zM443 133h3v1h-3zM449 133h3v1h-3zM455 133h3v1h-3zM461 133h3v1h-3zM467 133h3v1h-3zM473 133h3v1h-3zM479 133h3v1h-3zM485 133h3v1h-3zM491 133h3v1h-3zM497 133h3v1h-3zM503 133h3v1h-3zM509 133h3v1h-3zM515 133h3v1h-3zM521 133h3v1h-3zM527 133h3v1h-3zM533 133h3v1h-3zM539 133h3v1h-3zM545 133h3v1h-3zM551 133h3v1h-3zM557 133h3v1h-3zM563 133h3v1h-3zM569 133h3v1h-3zM575 133h3v1h-3zM581 133h3v1h-3zM587 133h3v1h-3zM593 133h3v1h-3zM599 133h3v1h-3zM605 133h3v1h-3zM611 133h3v1h-3zM617 133h3v1h-3zM623 133h3v1h-3zM629 133h3v1h-3zM635 133h3v1h-3zM641 133h3v1h-3zM647 133h3v1h-3zM653 133h3v1h-3zM659 133h3v1h-3zM665 133h3v1h-3zM671 133h3v1h-3zM677 133h3v1h-3zM683 133h3v1h-3zM689 133h1v1h-1zM277 133h1v2h-1zM277 134h1v1h-1zM277 138h1v3h-1zM277 144h1v3h-1zM277 150h1v3h-1zM277 156h1v3h-1zM277 162h1v3h-1zM277 168h1v3h-1zM277 174h1v3h-1zM277 180h1v3h-1zM277 186h1v3h-1zM277 192h1v3h-1zM277 198h1v3h-1zM277 204h1v3h-1zM277 210h1v3h-1zM277 216h1v3h-1zM277 222h1v3h-1zM277 228h1v3h-1zM277 234h1v3h-1zM277 240h1v3h-1zM277 246h1v3h-1zM277 252h1v3h-1zM277 258h1v3h-1zM277 264h1v3h-1zM277 270h1v3h-1zM277 276h1v3h-1zM277 282h1v3h-1zM277 288h1v3h-1zM277 294h1v3h-1zM277 300h1v3h-1zM277 306h1v3h-1zM277 312h1v3h-1zM277 318h1v3h-1zM277 324h1v3h-1zM277 330h1v3h-1zM277 336h1v3h-1zM277 342h1v3h-1zM277 348h1v3h-1zM277 354h1v3h-1zM277 360h1v3h-1zM277 366h1v3h-1zM277 372h1v3h-1zM277 378h1v3h-1zM277 384h1v3h-1zM277 390h1v3h-1zM277 396h1v3h-1zM277 402h1v3h-1zM277 408h1v3h-1zM277 414h1v3h-1zM277 420h1v3h-1zM277 426h1v3h-1zM277 432h1v3h-1zM277 438h1v3h-1zM277 444h1v3h-1zM277 450h1v3h-1zM277 456h1v3h-1zM277 462h1v3h-1zM277 468h1v3h-1zM277 474h1v3h-1zM277 480h1v3h-1zM277 486h1v3h-1zM277 492h1v3h-1zM277 498h1v3h-1zM277 504h1v3h-1zM277 510h1v3h-1zM277 516h1v3h-1zM277 522h1v3h-1zM277 528h1v3h-1zM277 534h1v3h-1zM277 540h1v3h-1zM277 546h1v3h-1zM277 552h1v3h-1zM277 558h1v3h-1zM277 564h1v3h-1zM277 570h1v3h-1zM277 576h1v3h-1zM277 582h1v3h-1zM277 588h1v3h-1zM277 594h1v3h-1zM277 600h1v3h-1zM277 606h1v3h-1zM277 612h1v3h-1zM277 618h1v3h-1zM277 624h1v3h-1zM277 630h1v3h-1zM277 636h1v3h-1zM277 642h1v3h-1zM277 648h1v3h-1zM277 654h1v3h-1zM277 660h1v3h-1zM277 666h1v3h-1zM277 672h1v3h-1zM277 678h1v3h-1zM277 684h1v3h-1zM277 690h1v3h-1zM277 696h1v3h-1zM277 702h1v3h-1zM277 708h1v3h-1zM277 714h1v3h-1zM277 720h1v3h-1zM277 726h1v3h-1zM277 732h1v3h-1zM277 738h1v3h-1zM277 744h1v3h-1zM277 750h1v3h-1zM277 756h1v3h-1zM689 134h1v1h-1zM689 138h1v3h-1zM689 144h1v3h-1zM689 150h1v3h-1zM689 156h1v3h-1zM689 162h1v3h-1zM689 168h1v3h-1zM689 174h1v3h-1zM689 180h1v3h-1zM689 186h1v3h-1zM689 192h1v3h-1zM689 198h1v3h-1zM689 204h1v3h-1zM689 210h1v3h-1zM689 216h1v3h-1zM689 222h1v3h-1zM689 228h1v3h-1zM689 234h1v3h-1zM689 240h1v3h-1zM689 246h1v3h-1zM689 252h1v3h-1zM689 258h1v3h-1zM689 264h1v3h-1zM689 270h1v3h-1zM689 276h1v3h-1zM689 282h1v3h-1zM689 288h1v3h-1zM689 294h1v3h-1zM689 300h1v3h-1zM689 306h1v3h-1zM689 312h1v3h-1zM689 318h1v3h-1zM689 324h1v3h-1zM689 330h1v3h-1zM689 336h1v3h-1zM689 342h1v3h-1zM689 348h1v3h-1zM689 354h1v3h-1zM689 360h1v3h-1zM689 366h1v3h-1zM689 372h1v3h-1zM689 378h1v3h-1zM689 384h1v3h-1zM689 390h1v3h-1zM689 396h1v3h-1zM689 402h1v3h-1zM689 408h1v3h-1zM689 414h1v3h-1zM689 420h1v3h-1zM689 426h1v3h-1zM689 432h1v3h-1zM689 438h1v3h-1zM689 444h1v3h-1zM689 450h1v3h-1zM689 456h1v3h-1zM689 462h1v3h-1zM689 468h1v3h-1zM689 474h1v3h-1zM689 480h1v3h-1zM689 486h1v3h-1zM689 492h1v3h-1zM689 498h1v3h-1zM689 504h1v3h-1zM689 510h1v3h-1zM689 516h1v3h-1zM689 522h1v3h-1zM689 528h1v3h-1zM689 534h1v3h-1zM689 540h1v3h-1zM689 546h1v3h-1zM689 552h1v3h-1zM689 558h1v3h-1zM689 564h1v3h-1zM689 570h1v3h-1zM689 576h1v3h-1zM689 582h1v3h-1zM689 588h1v3h-1zM689 594h1v3h-1zM689 600h1v3h-1zM689 606h1v3h-1zM689 612h1v3h-1zM689 618h1v3h-1zM689 624h1v3h-1zM689 630h1v3h-1zM689 636h1v3h-1zM689 642h1v3h-1zM689 648h1v3h-1zM689 654h1v3h-1zM689 660h1v3h-1zM689 666h1v3h-1zM689 672h1v3h-1zM689 678h1v3h-1zM689 684h1v3h-1zM689 690h1v3h-1zM689 696h1v3h-1zM689 702h1v3h-1zM689 708h1v3h-1zM689 714h1v3h-1zM689 720h1v3h-1zM689 726h1v3h-1zM689 732h1v3h-1zM689 738h1v3h-1zM689 744h1v3h-1zM689 750h1v3h-1zM689 756h1v3h-1zM410 94h3v1h-3zM416 94h3v1h-3zM422 94h3v1h-3zM428 94h3v1h-3zM434 94h3v1h-3zM440 94h3v1h-3zM446 94h3v1h-3zM452 94h3v1h-3zM458 94h3v1h-3zM464 94h3v1h-3zM470 94h3v1h-3zM476 94h3v1h-3zM482 94h3v1h-3zM488 94h3v1h-3zM494 94h3v1h-3zM500 94h3v1h-3zM506 94h3v1h-3zM512 94h3v1h-3zM518 94h3v1h-3zM524 94h3v1h-3zM530 94h3v1h-3zM536 94h3v1h-3zM410 125h3v1h-3zM416 125h3v1h-3zM422 125h3v1h-3zM428 125h3v1h-3zM434 125h3v1h-3zM440 125h3v1h-3zM446 125h3v1h-3zM452 125h3v1h-3zM458 125h3v1h-3zM464 125h3v1h-3zM470 125h3v1h-3zM476 125h3v1h-3zM482 125h3v1h-3zM488 125h3v1h-3zM494 125h3v1h-3zM500 125h3v1h-3zM506 125h3v1h-3zM512 125h3v1h-3zM518 125h3v1h-3zM524 125h3v1h-3zM530 125h3v1h-3zM536 125h3v1h-3zM408 96h1v3h-1zM408 102h1v3h-1zM408 108h1v3h-1zM408 114h1v3h-1zM408 120h1v3h-1zM540 96h1v3h-1zM540 102h1v3h-1zM540 108h1v3h-1zM540 114h1v3h-1zM540 120h1v3h-1zM440 128h3v1h-3zM446 128h3v1h-3zM452 128h3v1h-3zM458 128h3v1h-3zM464 128h3v1h-3zM470 128h3v1h-3zM440 145h3v1h-3zM446 145h3v1h-3zM452 145h3v1h-3zM458 145h3v1h-3zM464 145h3v1h-3zM470 145h3v1h-3zM440 129h1v3h-1zM440 135h1v3h-1zM440 141h1v3h-1zM472 129h1v3h-1zM472 135h1v3h-1zM472 141h1v3h-1zM474 126h1v1h-1zM478 126h3v1h-3zM484 126h3v1h-3zM490 126h3v1h-3zM496 126h3v1h-3zM502 126h3v1h-3zM508 126h3v1h-3zM514 126h1v1h-1zM474 148h1v1h-1zM478 148h3v1h-3zM484 148h3v1h-3zM490 148h3v1h-3zM496 148h3v1h-3zM502 148h3v1h-3zM508 148h3v1h-3zM514 148h1v1h-1zM474 127h1v3h-1zM474 133h1v3h-1zM474 139h1v3h-1zM474 145h1v3h-1zM514 127h1v3h-1zM514 133h1v3h-1zM514 139h1v3h-1zM514 145h1v3h-1zM295 210h3v1h-3zM301 210h3v1h-3zM307 210h3v1h-3zM313 210h3v1h-3zM319 210h3v1h-3zM325 210h3v1h-3zM331 210h3v1h-3zM337 210h3v1h-3zM343 210h3v1h-3zM349 210h3v1h-3zM355 210h3v1h-3zM361 210h3v1h-3zM367 210h3v1h-3zM373 210h3v1h-3zM379 210h3v1h-3zM385 210h3v1h-3zM391 210h3v1h-3zM295 244h3v1h-3zM301 244h3v1h-3zM307 244h3v1h-3zM313 244h3v1h-3zM319 244h3v1h-3zM325 244h3v1h-3zM331 244h3v1h-3zM337 244h3v1h-3zM343 244h3v1h-3zM349 244h3v1h-3zM355 244h3v1h-3zM361 244h3v1h-3zM367 244h3v1h-3zM373 244h3v1h-3zM379 244h3v1h-3zM385 244h3v1h-3zM391 244h3v1h-3zM293 211h1v3h-1zM293 217h1v3h-1zM293 223h1v3h-1zM293 229h1v3h-1zM293 235h1v3h-1zM293 241h1v3h-1zM394 211h1v3h-1zM394 217h1v3h-1zM394 223h1v3h-1zM394 229h1v3h-1zM394 235h1v3h-1zM394 241h1v3h-1zM342 239h1v1h-1zM346 239h3v1h-3zM352 239h3v1h-3zM358 239h3v1h-3zM364 239h3v1h-3zM370 239h3v1h-3zM376 239h3v1h-3zM382 239h3v1h-3zM388 239h3v1h-3zM394 239h1v1h-1zM342 260h1v1h-1zM346 260h3v1h-3zM352 260h3v1h-3zM358 260h3v1h-3zM364 260h3v1h-3zM370 260h3v1h-3zM376 260h3v1h-3zM382 260h3v1h-3zM388 260h3v1h-3zM394 260h1v1h-1zM342 242h1v3h-1zM342 248h1v3h-1zM342 254h1v3h-1zM394 242h1v3h-1zM394 248h1v3h-1zM394 254h1v3h-1zM315 240h1v1h-1zM319 240h3v1h-3zM325 240h3v1h-3zM331 240h3v1h-3zM337 240h3v1h-3zM343 240h1v1h-1zM315 262h1v1h-1zM319 262h3v1h-3zM325 262h3v1h-3zM331 262h3v1h-3zM337 262h3v1h-3zM343 262h1v1h-1zM315 241h1v3h-1zM315 247h1v3h-1zM315 253h1v3h-1zM315 259h1v3h-1zM343 241h1v3h-1zM343 247h1v3h-1zM343 253h1v3h-1zM343 259h1v3h-1zM514 280h3v1h-3zM520 280h3v1h-3zM526 280h3v1h-3zM532 280h3v1h-3zM538 280h3v1h-3zM544 280h3v1h-3zM550 280h3v1h-3zM556 280h3v1h-3zM562 280h3v1h-3zM568 280h3v1h-3zM574 280h3v1h-3zM580 280h3v1h-3zM586 280h3v1h-3zM592 280h3v1h-3zM598 280h3v1h-3zM604 280h3v1h-3zM610 280h2v1h-2zM514 315h3v1h-3zM520 315h3v1h-3zM526 315h3v1h-3zM532 315h3v1h-3zM538 315h3v1h-3zM544 315h3v1h-3zM550 315h3v1h-3zM556 315h3v1h-3zM562 315h3v1h-3zM568 315h3v1h-3zM574 315h3v1h-3zM580 315h3v1h-3zM586 315h3v1h-3zM592 315h3v1h-3zM598 315h3v1h-3zM604 315h3v1h-3zM610 315h2v1h-2zM514 284h1v3h-1zM514 290h1v3h-1zM514 296h1v3h-1zM514 302h1v3h-1zM514 308h1v3h-1zM514 314h1v1h-1zM611 284h1v3h-1zM611 290h1v3h-1zM611 296h1v3h-1zM611 302h1v3h-1zM611 308h1v3h-1zM611 314h1v1h-1zM525 319h3v1h-3zM531 319h3v1h-3zM537 319h3v1h-3zM543 319h3v1h-3zM549 319h2v1h-2zM525 340h3v1h-3zM531 340h3v1h-3zM537 340h3v1h-3zM543 340h3v1h-3zM549 340h2v1h-2zM525 322h1v3h-1zM525 328h1v3h-1zM525 334h1v3h-1zM550 322h1v3h-1zM550 328h1v3h-1zM550 334h1v3h-1zM548 317h2v1h-2zM553 317h3v1h-3zM559 317h3v1h-3zM565 317h3v1h-3zM571 317h3v1h-3zM577 317h3v1h-3zM583 317h1v1h-1zM548 342h2v1h-2zM553 342h3v1h-3zM559 342h3v1h-3zM565 342h3v1h-3zM571 342h3v1h-3zM577 342h3v1h-3zM583 342h1v1h-1zM548 318h1v1h-1zM548 322h1v3h-1zM548 328h1v3h-1zM548 334h1v3h-1zM548 340h1v2h-1zM583 318h1v1h-1zM583 322h1v3h-1zM583 328h1v3h-1zM583 334h1v3h-1zM583 340h1v2h-1zM333 359h1v1h-1zM337 359h3v1h-3zM343 359h3v1h-3zM349 359h3v1h-3zM355 359h3v1h-3zM361 359h3v1h-3zM367 359h3v1h-3zM373 359h3v1h-3zM379 359h3v1h-3zM385 359h3v1h-3zM391 359h3v1h-3zM397 359h3v1h-3zM403 359h3v1h-3zM409 359h3v1h-3zM415 359h3v1h-3zM421 359h3v1h-3zM333 393h1v1h-1zM337 393h3v1h-3zM343 393h3v1h-3zM349 393h3v1h-3zM355 393h3v1h-3zM361 393h3v1h-3zM367 393h3v1h-3zM373 393h3v1h-3zM379 393h3v1h-3zM385 393h3v1h-3zM391 393h3v1h-3zM397 393h3v1h-3zM403 393h3v1h-3zM409 393h3v1h-3zM415 393h3v1h-3zM421 393h3v1h-3zM333 360h1v3h-1zM333 366h1v3h-1zM333 372h1v3h-1zM333 378h1v3h-1zM333 384h1v3h-1zM333 390h1v3h-1zM426 360h1v3h-1zM426 366h1v3h-1zM426 372h1v3h-1zM426 378h1v3h-1zM426 384h1v3h-1zM426 390h1v3h-1zM337 396h3v1h-3zM343 396h3v1h-3zM349 396h3v1h-3zM355 396h3v1h-3zM361 396h3v1h-3zM367 396h3v1h-3zM373 396h3v1h-3zM337 419h3v1h-3zM343 419h3v1h-3zM349 419h3v1h-3zM355 419h3v1h-3zM361 419h3v1h-3zM367 419h3v1h-3zM373 419h3v1h-3zM336 400h1v3h-1zM336 406h1v3h-1zM336 412h1v3h-1zM336 418h1v1h-1zM375 400h1v3h-1zM375 406h1v3h-1zM375 412h1v3h-1zM375 418h1v1h-1zM375 395h1v1h-1zM379 395h3v1h-3zM385 395h3v1h-3zM391 395h3v1h-3zM397 395h3v1h-3zM403 395h3v1h-3zM375 421h1v1h-1zM379 421h3v1h-3zM385 421h3v1h-3zM391 421h3v1h-3zM397 421h3v1h-3zM403 421h3v1h-3zM375 398h1v3h-1zM375 404h1v3h-1zM375 410h1v3h-1zM375 416h1v3h-1zM408 398h1v3h-1zM408 404h1v3h-1zM408 410h1v3h-1zM408 416h1v3h-1zM527 379h2v1h-2zM532 379h3v1h-3zM538 379h3v1h-3zM544 379h3v1h-3zM550 379h3v1h-3zM556 379h3v1h-3zM562 379h3v1h-3zM568 379h3v1h-3zM574 379h3v1h-3zM580 379h3v1h-3zM586 379h3v1h-3zM592 379h3v1h-3zM598 379h3v1h-3zM604 379h3v1h-3zM610 379h3v1h-3zM616 379h2v1h-2zM527 415h2v1h-2zM532 415h3v1h-3zM538 415h3v1h-3zM544 415h3v1h-3zM550 415h3v1h-3zM556 415h3v1h-3zM562 415h3v1h-3zM568 415h3v1h-3zM574 415h3v1h-3zM580 415h3v1h-3zM586 415h3v1h-3zM592 415h3v1h-3zM598 415h3v1h-3zM604 415h3v1h-3zM610 415h3v1h-3zM616 415h2v1h-2zM527 381h1v3h-1zM527 387h1v3h-1zM527 393h1v3h-1zM527 399h1v3h-1zM527 405h1v3h-1zM527 411h1v3h-1zM617 381h1v3h-1zM617 387h1v3h-1zM617 393h1v3h-1zM617 399h1v3h-1zM617 405h1v3h-1zM617 411h1v3h-1zM531 415h3v1h-3zM537 415h3v1h-3zM543 415h3v1h-3zM549 415h3v1h-3zM555 415h3v1h-3zM561 415h3v1h-3zM531 439h3v1h-3zM537 439h3v1h-3zM543 439h3v1h-3zM549 439h3v1h-3zM555 439h3v1h-3zM561 439h3v1h-3zM531 417h1v3h-1zM531 423h1v3h-1zM531 429h1v3h-1zM531 435h1v3h-1zM563 417h1v3h-1zM563 423h1v3h-1zM563 429h1v3h-1zM563 435h1v3h-1zM563 413h3v1h-3zM569 413h3v1h-3zM575 413h3v1h-3zM581 413h3v1h-3zM587 413h3v1h-3zM593 413h3v1h-3zM563 437h3v1h-3zM569 437h3v1h-3zM575 437h3v1h-3zM581 437h3v1h-3zM587 437h3v1h-3zM593 437h3v1h-3zM561 415h1v3h-1zM561 421h1v3h-1zM561 427h1v3h-1zM561 433h1v3h-1zM597 415h1v3h-1zM597 421h1v3h-1zM597 427h1v3h-1zM597 433h1v3h-1z"/></svg>
</div></div></div>
<div style="position:absolute;left:805px;top:0;width:1px;height:718px;background:#c9c9c9"></div>
<div style="position:absolute;left:0;top:717px;width:806px;height:1px;background:#c9c9c9"></div>
<svg style="position:absolute;left:1108px;top:18px" width="19" height="19" viewBox="0 0 19 19">
<circle cx="9.4" cy="9.7" r="8.65" fill="#2075b8"/>
<path d="M6.5 7.3 C6.5 5.4 7.9 4.7 9.5 4.7 C11.2 4.7 12.6 5.6 12.6 7.1 C12.6 8.6 11.2 9.1 10.5 9.7 C9.9 10.2 9.7 10.7 9.7 12.0" fill="none" stroke="#fff" stroke-width="2.5"/>
<rect x="8.3" y="13.2" width="2.9" height="2.6" fill="#fff"/>
</svg>
<div class="inp" style="left:997px;top:84px;width:129px;height:26px;border-color:#d0d0d0"></div>
<div class="inp" style="left:929px;top:118px;width:58px;height:26px;border-color:#d0d0d0"></div>
<svg style="position:absolute;left:973.5px;top:128px" width="7" height="7"><path d="M0 0 H6.5 L3.25 6Z" fill="#111"/></svg>
<div class="inp" style="left:997px;top:118px;width:129px;height:26px;border-color:#d0d0d0"></div>
<div class="inp" style="left:929px;top:152px;width:58px;height:26px;border-color:#d0d0d0"></div>
<svg style="position:absolute;left:973.5px;top:162px" width="7" height="7"><path d="M0 0 H6.5 L3.25 6Z" fill="#111"/></svg>
<div class="inp" style="left:997px;top:152px;width:129px;height:26px;border-color:#d0d0d0"></div>
<div class="inp" style="left:929px;top:186px;width:58px;height:26px;border-color:#d0d0d0"></div>
<svg style="position:absolute;left:973.5px;top:196px" width="7" height="7"><path d="M0 0 H6.5 L3.25 6Z" fill="#111"/></svg>
<div class="inp" style="left:997px;top:186px;width:129px;height:26px;border-color:#d0d0d0"></div>
<div class="inp" style="left:929px;top:220px;width:58px;height:26px;border-color:#d0d0d0"></div>
<svg style="position:absolute;left:973.5px;top:230px" width="7" height="7"><path d="M0 0 H6.5 L3.25 6Z" fill="#111"/></svg>
<div class="inp" style="left:997px;top:220px;width:129px;height:26px;border-color:#d0d0d0"></div>
<div class="card" style="left:9px"></div>
<div class="card" style="left:99px"></div>
<div class="card" style="left:189px"></div>
<svg style="position:absolute;left:32px;top:740px" width="33" height="33" viewBox="0 0 33 33">
<rect x="12.3" y="0.5" width="8.6" height="31.5" rx="2" fill="#b2b2b2"/>
<rect x="0.5" y="12" width="31.5" height="8.6" rx="2" fill="#b2b2b2"/>
</svg>
<svg style="position:absolute;left:120px;top:740.5px" width="38" height="32" viewBox="0 0 38 32">
<rect x="0" y="0" width="36.9" height="31.1" rx="4.5" fill="#b2b2b2"/>
<g fill="#fff">
<rect x="2.9" y="5.6" width="8.4" height="5.8"/><rect x="14" y="5.6" width="8.7" height="5.8"/><rect x="25.8" y="5.6" width="8.4" height="5.8"/>
<rect x="2.9" y="14.1" width="8.4" height="5.8"/><rect x="14" y="14.1" width="8.7" height="5.8"/><rect x="25.8" y="14.1" width="8.4" height="5.8"/>
<rect x="2.9" y="22.7" width="8.4" height="5.8"/><rect x="14" y="22.7" width="8.7" height="5.8"/><rect x="25.8" y="22.7" width="8.4" height="5.8"/>
</g></svg>
<svg style="position:absolute;left:210px;top:740.5px" width="38" height="32" viewBox="0 0 38 32">
<rect x="0" y="0" width="36.9" height="31.1" rx="4.5" fill="#b2b2b2"/>
<g fill="#fff">
<rect x="2.9" y="5.6" width="8.4" height="5.8"/><rect x="14" y="5.6" width="8.7" height="5.8"/><rect x="25.8" y="5.6" width="8.4" height="5.8"/>
<rect x="2.9" y="14.1" width="8.4" height="5.8"/><rect x="14" y="14.1" width="8.7" height="5.8"/><rect x="25.8" y="14.1" width="8.4" height="5.8"/>
<rect x="2.9" y="22.7" width="8.4" height="5.8"/><rect x="14" y="22.7" width="8.7" height="5.8"/><rect x="25.8" y="22.7" width="8.4" height="5.8"/>
</g></svg>
<div class="t" style="left:825.19px;top:20.10px;font-size:20.6px;color:#262626;transform:scaleX(0.9531);">Data Label</div>
<div class="t" style="left:827.10px;top:57.00px;font-size:11.5px;color:#262626;transform:scaleX(0.9323);">The Data Label shows a single piece of numerical data.</div>
<div class="t" style="left:825.57px;top:91.00px;font-size:11.7px;color:#262626;transform:scaleX(0.9300);">Source Data<span style="color:#e85a5a">*</span></div>
<div class="t" style="left:1005.77px;top:91.40px;font-size:12.2px;color:#555;transform:scaleX(0.9300);">Chokes1</div>
<div class="t" style="left:826.50px;top:124.95px;font-size:11.7px;color:#262626;transform:scaleX(0.9300);">Value Column<span style="color:#e85a5a">*</span></div>
<div class="t" style="left:938.50px;top:124.95px;font-size:11.7px;color:#555;transform:scaleX(0.9429);">Text</div>
<div class="t" style="left:1005.77px;top:125.35px;font-size:12.2px;color:#555;transform:scaleX(0.9300);">GLChoke</div>
<div class="t" style="left:825.57px;top:158.90px;font-size:11.7px;color:#262626;transform:scaleX(0.9300);">Filter Column</div>
<div class="t" style="left:938.50px;top:158.90px;font-size:11.7px;color:#555;transform:scaleX(0.9429);">Text</div>
<div class="t" style="left:1006.70px;top:159.30px;font-size:12.2px;color:#999;transform:scaleX(0.9300);">Text...</div>
<div class="t" style="left:825.57px;top:192.85px;font-size:11.7px;color:#262626;transform:scaleX(0.9300);">Filter Value</div>
<div class="t" style="left:938.50px;top:192.85px;font-size:11.7px;color:#555;transform:scaleX(0.9429);">Text</div>
<div class="t" style="left:1006.70px;top:193.25px;font-size:12.2px;color:#999;transform:scaleX(0.9300);">Text...</div>
<div class="t" style="left:825.57px;top:226.80px;font-size:11.7px;color:#262626;transform:scaleX(0.9300);">Decimals</div>
<div class="t" style="left:937.57px;top:226.80px;font-size:11.7px;color:#555;transform:scaleX(0.9300);"><span style="display:inline-block;width:27px;overflow:hidden;vertical-align:top">Numb</span></div>
<div class="t" style="left:1006.70px;top:227.20px;font-size:12.2px;color:#555;transform:scaleX(0.9300);">0</div>
<div class="t" style="left:25.80px;top:780.90px;font-size:11.1px;color:#262626;transform:scaleX(0.9848);">Add Data</div>
<div class="t" style="left:105.80px;top:780.90px;font-size:11.1px;color:#262626;transform:scaleX(0.9406);">OilPressures1</div>
<div class="t" style="left:206.83px;top:780.90px;font-size:11.1px;color:#262626;transform:scaleX(0.9667);">Chokes1</div>
</body></html>
